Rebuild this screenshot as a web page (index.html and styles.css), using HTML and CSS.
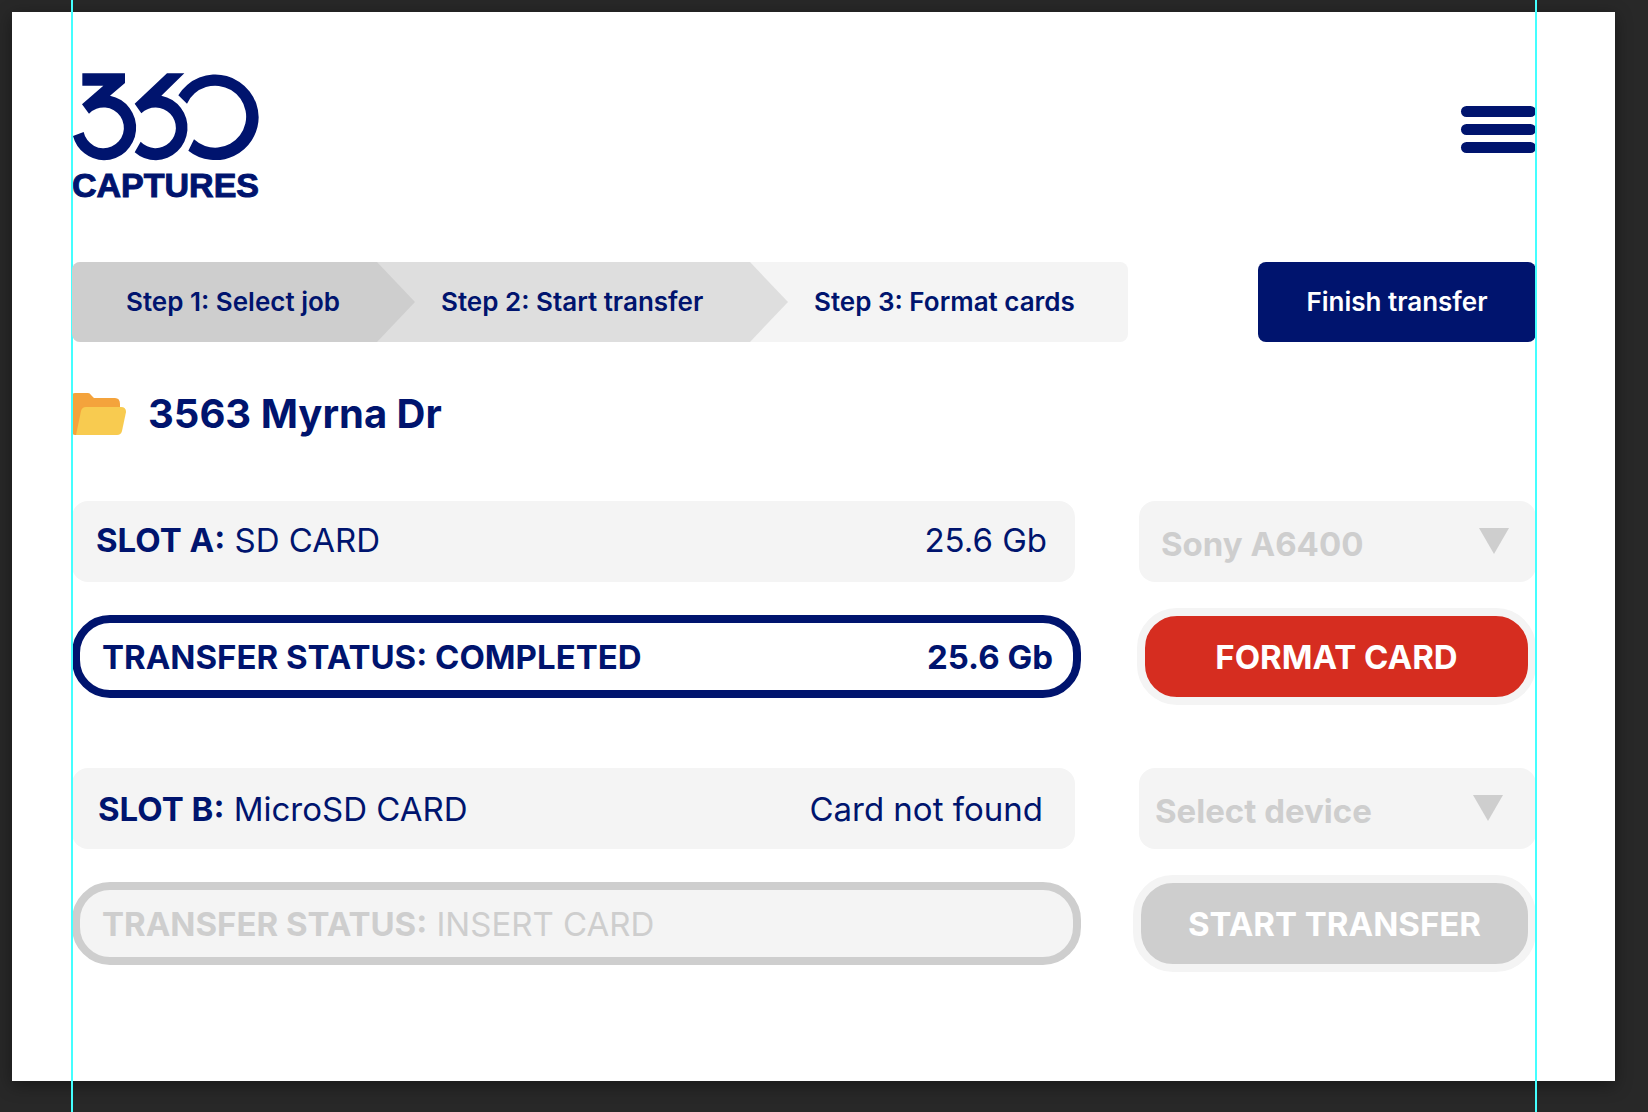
FILE: index.html
```html
<!DOCTYPE html>
<html lang="en">
<head>
<meta charset="utf-8">
<meta name="viewport" content="width=device-width, initial-scale=1">
<title>360 Captures - Format cards</title>
<link rel="stylesheet" href="styles.css">
</head>
<body>
<main class="artboard">
  <header class="header">
    <a class="logo" href="#">
      <svg class="logo-mark" viewBox="216 216 564 270" role="img" aria-label="360">
        <path d="M247 220H375V249L330 287A98 98 0 0 1 312 481A98 98 0 0 1 219 408L251 396A61 61 0 1 0 267 341L246 313L310 257H247Z"/>
        <path d="M501 220H553L484 287A98 98 0 0 1 468 481A98 98 0 0 1 404 457L422 425A61 61 0 1 0 424 340L404 311Z"/>
        <path d="M535 286A130 130 0 0 1 776 352A130 130 0 0 1 565 452L582 418A93 93 0 1 0 561 311Z"/>
      </svg>
      <span class="logo-name">CAPTURES</span>
    </a>
    <button class="menu" type="button" aria-label="Menu">
      <span class="menu-bar"></span>
      <span class="menu-bar"></span>
      <span class="menu-bar"></span>
    </button>
  </header>

  <div class="progress">
    <ol class="steps">
      <li class="step step-first">Step 1: Select job</li>
      <li class="step step-second">Step 2: Start transfer</li>
      <li class="step step-third">Step 3: Format cards</li>
    </ol>
    <button class="finish" type="button">Finish transfer</button>
  </div>

  <div class="job">
    <svg class="folder" viewBox="0 0 54 42" aria-hidden="true">
      <path fill="#f4a33c" d="M0 3Q0 0 3 0H16Q18 0 19 2L22 5H43Q48 5 48 11V30L6 42H3Q0 42 0 38Z"/>
      <path fill="#f8cb50" d="M9 18Q10 14 14 14H49Q54 14 54 19L50 38Q49 42 45 42H4Z"/>
    </svg>
    <h1 class="job-name">3563 Myrna Dr</h1>
  </div>

  <section class="slot slot-loaded">
    <div class="card"><span><b>SLOT A:</b> SD CARD</span><span>25.6 Gb</span></div>
    <div class="device">
      <select class="device-select" aria-label="Device for slot A"><option>Sony A6400</option></select>
      <svg class="caret" viewBox="0 0 30 26" aria-hidden="true"><path d="M0 0H30L15 26Z"/></svg>
    </div>
    <div class="status"><b>TRANSFER STATUS: COMPLETED</b><b>25.6 Gb</b></div>
    <button class="action" type="button">FORMAT CARD</button>
  </section>

  <section class="slot slot-empty">
    <div class="card"><span><b>SLOT B:</b> MicroSD CARD</span><span>Card not found</span></div>
    <div class="device">
      <select class="device-select" aria-label="Device for slot B"><option>Select device</option></select>
      <svg class="caret" viewBox="0 0 30 26" aria-hidden="true"><path d="M0 0H30L15 26Z"/></svg>
    </div>
    <div class="status"><span><b>TRANSFER STATUS:</b> INSERT CARD</span></div>
    <button class="action" type="button">START TRANSFER</button>
  </section>
</main>
<div class="guide guide-left"></div>
<div class="guide guide-right"></div>
</body>
</html>
```
FILE: styles.css
```css
:root {
  --navy: #00146e;
  --pale: #f4f4f4;
  --grey: #cecece;
}

* {
  box-sizing: border-box;
}

body {
  position: relative;
  min-height: 100vh;
  margin: 0;
  padding: 12px 33px 31px 12px;
  background: #282828;
  color: var(--navy);
  font-family: Inter, "Open Sans", sans-serif;
  font-size: 33px;
}

button,
select {
  border: 0;
  font: inherit;
}

b {
  font-weight: 700;
}

.artboard {
  padding: 60px 79px 116px 60px;
  background: #fff;
  box-shadow: 0 4px 16px rgba(0, 0, 0, 0.4);
}

.header {
  display: flex;
  align-items: flex-start;
  justify-content: space-between;
}

.logo {
  display: flex;
  flex-direction: column;
  gap: 6px;
  color: inherit;
  text-decoration: none;
}

.logo-mark {
  width: 188px;
  height: 90px;
  fill: var(--navy);
}

.logo-name {
  font: 700 34px/34px "Liberation Sans", Arial, sans-serif;
  -webkit-text-stroke: 1px var(--navy);
}

.menu {
  display: flex;
  flex-direction: column;
  gap: 7px;
  width: 75px;
  margin-top: 34px;
  padding: 0;
  background: none;
}

.menu-bar {
  height: 11px;
  border-radius: 6px;
  background: var(--navy);
}

.progress {
  display: flex;
  gap: 130px;
  margin-top: 60px;
  font-size: 26px;
  font-weight: 600;
}

.steps {
  display: grid;
  flex: 1;
  grid-template-columns: 343fr 373fr 340fr;
  margin: 0;
  padding: 0;
  overflow: hidden;
  border-radius: 8px;
  background: var(--pale);
  list-style: none;
}

.step {
  display: flex;
  align-items: center;
  height: 80px;
  padding: 0 0 2px 26px;
  white-space: nowrap;
}

.step-first,
.step-second {
  clip-path: polygon(0 0, calc(100% - 38px) 0, 100% 50%, calc(100% - 38px) 100%, 0 100%);
}

.step-first {
  z-index: 1;
  padding-left: 54px;
  background: var(--grey);
}

.step-second {
  margin-left: -40px;
  padding-left: 66px;
  background: #dedede;
}

.finish {
  width: 278px;
  height: 80px;
  padding: 0 0 2px;
  border-radius: 8px;
  background: var(--navy);
  color: #fff;
}

.job {
  display: flex;
  align-items: center;
  gap: 22px;
  margin: 48px 0 63px;
}

.folder {
  width: 54px;
  height: 42px;
}

.job-name {
  margin: 0;
  font-size: 40px;
  font-weight: 700;
  line-height: 48px;
}

.slot {
  display: grid;
  grid-template-columns: 1fr 397px;
  grid-template-rows: 81px 83px;
  gap: 33px 64px;
}

.slot + .slot {
  margin-top: 70px;
}

.card,
.status {
  display: flex;
  align-items: center;
  justify-content: space-between;
  white-space: nowrap;
}

.card {
  padding: 0 28px 4px 24px;
  border-radius: 16px;
  background: var(--pale);
}

.slot-empty .card {
  padding: 0 32px 0 26px;
}

.device {
  position: relative;
  display: grid;
}

.device-select {
  padding: 4px 64px 0 22px;
  border-radius: 16px;
  appearance: none;
  background: var(--pale);
  color: var(--grey);
  font-weight: 700;
}

.slot-empty .device-select {
  padding-left: 16px;
}

.caret {
  position: absolute;
  top: 27px;
  right: 27px;
  width: 30px;
  height: 26px;
  fill: var(--grey);
  pointer-events: none;
}

.slot-empty .caret {
  right: 33px;
}

.status {
  margin-right: -6px;
  padding: 0 20px 0 22px;
  border: 8px solid;
  border-radius: 38px;
}

.slot-empty .status {
  border-color: var(--grey);
  background: var(--pale);
  color: var(--grey);
}

.action {
  margin: -7px 0 -7px -2px;
  border: 8px solid var(--pale);
  border-radius: 40px;
  background: #d62d20;
  color: #fff;
  font-weight: 700;
}

.slot-empty .action {
  margin-left: -6px;
  background: var(--grey);
}

.guide {
  position: absolute;
  top: 0;
  bottom: 0;
  width: 2px;
  background: #4ff;
  pointer-events: none;
}

.guide-left {
  left: 71px;
}

.guide-right {
  right: 111px;
}
```
